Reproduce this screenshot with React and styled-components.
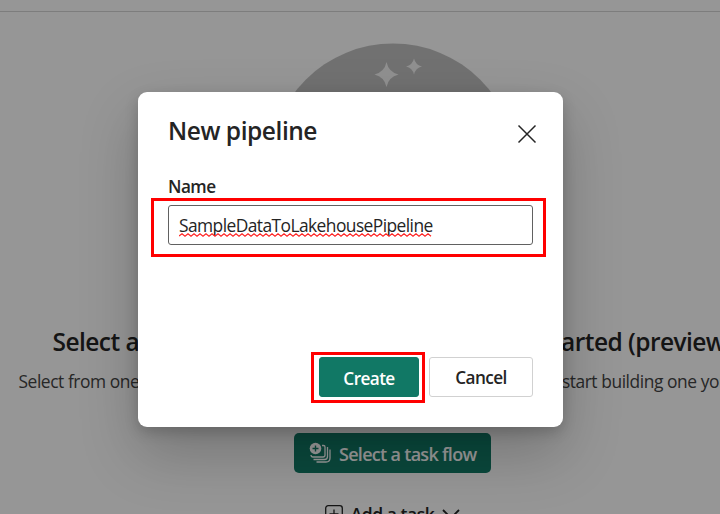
import React from "react";
import styled, { createGlobalStyle } from "styled-components";

const Global = createGlobalStyle`
  * { box-sizing: border-box; }
  html, body { margin: 0; overflow: hidden; }
  body, button, input { font-family: "Open Sans", "Noto Sans", sans-serif; }
`;

const Page = styled.div`
  position: relative;
  width: 720px;
  height: 514px;
  overflow: hidden;
  background: #fafafa;
  color: #242424;
`;

const TopBar = styled.header`
  height: 12px;
  border-bottom: 1px solid #d1d1d1;
`;

const Canvas = styled.main`
  display: flex;
  flex-direction: column;
  align-items: center;
  width: 785px;
  padding-top: 31px;
`;

const Illustration = styled.svg`
  display: block;
  width: 248px;
  height: 248px;
`;

const Line = styled.div`
  display: flex;
  justify-content: space-between;
  width: ${(p) => p.$width}px;
  margin-top: ${(p) => p.$gap}px;
  white-space: pre;
  color: ${(p) => p.$color};
  font-size: ${(p) => p.$size}px;
  font-weight: ${(p) => p.$weight};
  line-height: 34px;
  letter-spacing: ${(p) => p.$spacing}px;
`;

const TaskFlowButton = styled.button`
  display: flex;
  align-items: center;
  gap: 7px;
  width: 197px;
  height: 40px;
  margin-top: 35px;
  padding: 0 0 0 15px;
  border: 0;
  border-radius: 5px;
  background: #117865;
  color: #fff;
  font-size: 18px;
  font-weight: 600;
  letter-spacing: -0.7px;
  white-space: nowrap;
`;

const ButtonLabel = styled.span`
  position: relative;
  top: ${(p) => p.$drop || 0}px;
`;

const AddTask = styled.div`
  display: flex;
  align-items: center;
  gap: 8px;
  height: 24px;
  margin-top: 29px;
  font-size: 17.5px;
  font-weight: 600;
  letter-spacing: -0.45px;
  white-space: nowrap;
`;

const Overlay = styled.div`
  position: absolute;
  inset: 0;
  display: flex;
  align-items: flex-start;
  padding: 92px 0 0 138px;
  background: rgba(0, 0, 0, 0.4);
`;

const Dialog = styled.section`
  display: flex;
  flex-direction: column;
  width: 425px;
  height: 335px;
  padding: 22px 30px 30px;
  border-radius: 9px;
  background: #fff;
  box-shadow: 0 26px 58px rgba(0, 0, 0, 0.22), 0 5px 14px rgba(0, 0, 0, 0.18);
`;

const DialogHeader = styled.div`
  display: flex;
  justify-content: space-between;
  height: 56px;
`;

const Title = styled.h1`
  margin: 0;
  font-size: 24.5px;
  font-weight: 600;
  line-height: 34px;
  letter-spacing: -0.45px;
`;

const CloseButton = styled.button`
  width: 20px;
  height: 20px;
  margin: 10px -4px 0 0;
  padding: 0;
  border: 0;
  background: none;
  color: #242424;
`;

const Label = styled.label`
  height: 35px;
  font-size: 17.2px;
  font-weight: 600;
  line-height: 34px;
  letter-spacing: -0.55px;
`;

const Field = styled.div`
  position: relative;
  display: flex;
  align-items: center;
  height: 40px;
  padding-left: 10px;
  border: 1px solid #616161;
  border-radius: 3px;
`;

const Value = styled.span`
  position: relative;
  font-size: 17.4px;
  letter-spacing: -0.57px;
  line-height: 24px;
`;

const Squiggle = styled.svg`
  position: absolute;
  left: 0;
  top: 20px;
  width: 254px;
  height: 4px;
`;

const Highlight = styled.div`
  position: absolute;
  inset: ${(p) => p.$inset};
  border: 3px solid #f00;
  pointer-events: none;
`;

const Actions = styled.div`
  display: flex;
  justify-content: flex-end;
  gap: 10px;
  margin-top: auto;
`;

const ActionButton = styled.button`
  position: relative;
  width: ${(p) => p.$width}px;
  height: 40px;
  padding: 0;
  border: 1px solid ${(p) => (p.$primary ? "#117865" : "#d1d1d1")};
  border-radius: 3px;
  background: ${(p) => (p.$primary ? "#117865" : "#fff")};
  color: ${(p) => (p.$primary ? "#fff" : "#242424")};
  font-size: 17.2px;
  font-weight: 600;
  letter-spacing: -0.6px;
`;

function TaskFlowIcon() {
  return (
    <svg width="23" height="22" viewBox="0 0 23 22" fill="none" stroke="#fff">
      <path d="M13 3.5h1.5q1.5 0 1.5 1.500v8q0 2-2 2h-10q-2 0-2-2" strokeWidth="1.3" />
      <path d="M18.500 5v9.500q0 3-3 3h-11" strokeWidth="1.3" />
      <path d="M21 7.500v8.500q0 4-4 4h-9.500" strokeWidth="1.3" />
      <circle cx="6.500" cy="6.500" r="5.800" fill="#fff" stroke="none" />
      <path d="M6.500 3.500v6M3.500 6.500h6" stroke="#117865" strokeWidth="1.400" />
    </svg>
  );
}

function squigglePath(width) {
  let d = "M0 3";
  for (let x = 3; x <= width; x += 3) d += `L${x} ${(x / 3) % 2 ? 0.8 : 3.2}`;
  return d;
}

export default function App() {
  return (
    <Page>
      <Global />
      <TopBar />
      <Canvas>
        <Illustration viewBox="0 0 248 248">
          <circle cx="124" cy="124" r="123.500" fill="#bdbdbd" />
          <path d="M117.500 19q2 10 12 12.500q-10 2.500-12 12.500q-2-10-12-12.500q10-2.500 12-12.500z" fill="#f0f0f0" />
          <path d="M145 15.500q1.500 6.500 8 8q-6.500 1.500-8 8q-1.500-6.500-8-8q6.500-1.500 8-8z" fill="#f0f0f0" />
        </Illustration>
        <Line $width={680} $gap={34} $size={24.5} $weight={600} $spacing={-0.55} $color="#242424">
          <span>Select a task flow</span>
          <span>to get started (preview)</span>
        </Line>
        <Line $width={748} $gap={5} $size={17.4} $weight={400} $spacing={-0.44} $color="#424242">
          <span>Select from one of the task flows</span>
          <span>or start building one yourself.</span>
        </Line>
        <TaskFlowButton>
          <TaskFlowIcon />
          <ButtonLabel $drop={1}>Select a task flow</ButtonLabel>
        </TaskFlowButton>
        <AddTask>
          <svg width="18" height="18" viewBox="0 0 18 18" fill="none" stroke="currentColor" strokeWidth="1.300">
            <rect x="0.700" y="0.700" width="16.600" height="16.600" rx="2.500" />
            <path d="M9 4.500v9M4.500 9h9" />
          </svg>
          <span>Add a task</span>
          <svg width="18" height="10" viewBox="0 0 18 10" fill="none" stroke="currentColor" strokeWidth="1.800">
            <path d="M1 1l8 8l8-8" />
          </svg>
        </AddTask>
      </Canvas>
      <Overlay>
        <Dialog role="dialog" aria-label="New pipeline">
          <DialogHeader>
            <Title>New pipeline</Title>
            <CloseButton aria-label="Close">
              <svg width="20" height="20" viewBox="0 0 20 20" fill="none" stroke="currentColor" strokeWidth="1.500">
                <path d="M1.500 1.500l17 17M18.500 1.500l-17 17" />
              </svg>
            </CloseButton>
          </DialogHeader>
          <Label>Name</Label>
          <Field>
            <Value>
              SampleDataToLakehousePipeline
              <Squiggle viewBox="0 0 254 4" fill="none" stroke="#f22" strokeWidth="1.200">
                <path d={squigglePath(254)} />
              </Squiggle>
            </Value>
            <Highlight $inset="-8px -14px -13px -18px" />
          </Field>
          <Actions>
            <ActionButton $primary $width={100}>
              <ButtonLabel $drop={1}>Create</ButtonLabel>
              <Highlight $inset="-6px -7px -7px -9px" />
            </ActionButton>
            <ActionButton $width={104}>
              <ButtonLabel>Cancel</ButtonLabel>
            </ActionButton>
          </Actions>
        </Dialog>
      </Overlay>
    </Page>
  );
}
